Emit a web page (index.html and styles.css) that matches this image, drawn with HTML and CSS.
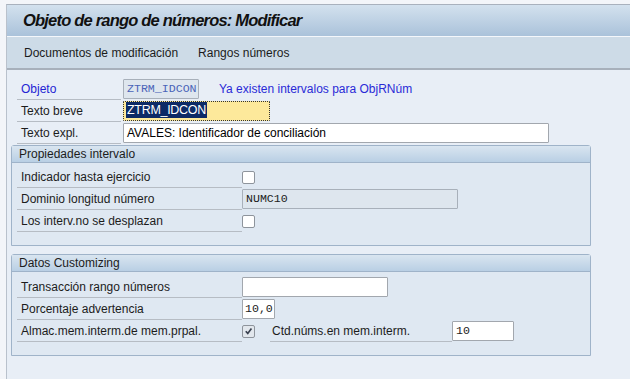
FILE: index.html
```html
<!DOCTYPE html>
<html lang="es">
<head>
<meta charset="utf-8">
<title>Objeto de rango de números: Modificar</title>
<link rel="stylesheet" href="styles.css">
</head>
<body>
<div class="window">
  <div class="titlebar"><h1 class="title">Objeto de rango de números: Modificar</h1></div>
  <div class="toolbar">
    <span class="tb-item">Documentos de modificación</span>
    <span class="tb-item">Rangos números</span>
  </div>
  <div class="content">
    <div class="head-rows">
      <div class="row">
        <span class="label label-short blue">Objeto</span>
        <span class="field field-ro mono blue w-obj">ZTRM_IDCON</span>
        <span class="info">Ya existen intervalos para ObjRNúm</span>
      </div>
      <div class="row">
        <span class="label label-short">Texto breve</span>
        <span class="field field-focus w-short"><span class="sel">ZTRM_IDCON</span></span>
      </div>
      <div class="row">
        <span class="label label-short">Texto expl.</span>
        <span class="field w-long">AVALES: Identificador de conciliación</span>
      </div>
    </div>

    <section class="group g1">
      <div class="group-head">Propiedades intervalo</div>
      <div class="group-body">
        <div class="row">
          <span class="label label-wide">Indicador hasta ejercicio</span>
          <span class="check"></span>
        </div>
        <div class="row">
          <span class="label label-wide">Dominio longitud número</span>
          <span class="field field-ro mono w-dom">NUMC10</span>
        </div>
        <div class="row">
          <span class="label label-wide">Los interv.no se desplazan</span>
          <span class="check"></span>
        </div>
      </div>
    </section>

    <section class="group g2">
      <div class="group-head">Datos Customizing</div>
      <div class="group-body">
        <div class="row">
          <span class="label label-wide">Transacción rango números</span>
          <span class="field w-trans"></span>
        </div>
        <div class="row">
          <span class="label label-wide">Porcentaje advertencia</span>
          <span class="field mono w-pct">10,0</span>
        </div>
        <div class="row">
          <span class="label label-wide">Almac.mem.interm.de mem.prpal.</span>
          <span class="check checked"><svg viewBox="0 0 12 12" width="12" height="12"><path d="M3 6.2 L5.2 8.6 L9.2 3.2" fill="none" stroke="#3a4150" stroke-width="1.8"/></svg></span>
          <span class="label label-sub">Ctd.núms.en mem.interm.</span>
          <span class="field mono w-num">10</span>
        </div>
      </div>
    </section>
  </div>
</div>
</body>
</html>
```
FILE: styles.css
```css
html, body {
  margin: 0;
  padding: 0;
}
body {
  width: 630px;
  height: 379px;
  overflow: hidden;
  background: #f3f5f9;
  font-family: "Liberation Sans", Arial, sans-serif;
  font-size: 12px;
  color: #000;
}
.window {
  margin: 4px 0 0 6px;
  height: 375px;
  border-left: 1px solid #b9c1cc;
  border-top: 1px solid #a9b1bd;
  background: #e8eef6;
}
.titlebar {
  height: 31px;
  background: linear-gradient(#d3e1ee, #aac2da);
  border-bottom: 1px solid #f4f7fb;
  display: flex;
  align-items: center;
  padding-left: 16px;
}
.title {
  margin: 0;
  font-size: 16.5px;
  font-weight: bold;
  font-style: italic;
  letter-spacing: -0.8px;
  color: #111;
}
.toolbar {
  height: 31px;
  background: #cddbe7;
  border-bottom: 2px solid #a7b0bb;
  display: flex;
  align-items: center;
  gap: 20px;
  padding-left: 17px;
  color: #1b1b1b;
}
.content {
  padding: 8px 0 0 4px;
}
.head-rows {
  padding-left: 6px;
}
.row {
  display: flex;
  align-items: center;
  height: 22px;
}
.label {
  box-sizing: border-box;
  height: 21px;
  line-height: 21px;
  padding-left: 4px;
  border-bottom: 1px solid #b6bcc4;
  color: #1c1c1c;
}
.label-short {
  width: 104px;
  margin-right: 2px;
}
.label.blue {
  color: #2424d4;
}
.field {
  box-sizing: border-box;
  height: 20px;
  line-height: 18px;
  padding: 0 3px;
  background: #fff;
  border: 1px solid #a2a7ae;
  border-radius: 1px;
  white-space: nowrap;
  overflow: hidden;
}
.field-ro {
  background: #dee6ee;
  border-color: #a8b0ba;
}
.mono {
  font-family: "Liberation Mono", "Courier New", monospace;
  font-size: 11.6px;
  color: #222;
}
.field.blue {
  color: #4a64b8;
}
.field-focus {
  background: #fde99b;
  border: 1px dotted #333;
  padding: 0 0 0 2px;
  line-height: 17px;
}
.sel {
  display: inline-block;
  background: #0d2a66;
  color: #fff;
  font-size: 12.5px;
  line-height: 16px;
  padding: 0 1px;
  letter-spacing: -0.3px;
}
.info {
  margin-left: 20px;
  color: #2a2ad6;
}
.w-obj { width: 76px; }
.w-short { width: 147px; }
.w-long { width: 426px; }
.w-dom { width: 216px; }
.w-trans { width: 146px; }
.w-pct { width: 33px; padding: 0 2px; }
.w-num { width: 62px; }

.group {
  width: 580px;
  box-sizing: border-box;
  border: 1px solid #9fb3c9;
  border-radius: 3px 3px 0 0;
  background: #dfe8f2;
}
.g1 {
  margin-top: 1px;
  height: 101px;
}
.g2 {
  margin-top: 8px;
  height: 102px;
}
.group-head {
  height: 16px;
  line-height: 16px;
  padding-left: 7px;
  background: linear-gradient(#d9e5f0, #b9cfe4);
  border-bottom: 1px solid #9fb3c9;
  color: #1c1c1c;
}
.group-body {
  padding: 3px 0 0 5px;
}
.g2 .group-body {
  padding-top: 4px;
}
.label-wide {
  width: 225px;
}
.check {
  box-sizing: border-box;
  width: 13px;
  height: 13px;
  background: #fff;
  border: 1px solid #8e949c;
  border-radius: 2px;
  display: flex;
  align-items: center;
  justify-content: center;
}
.check.checked {
  background: #e2e7ed;
}
.check svg {
  display: block;
}
.label-sub {
  width: 182px;
  margin-left: 15px;
  padding-left: 2px;
}
```
